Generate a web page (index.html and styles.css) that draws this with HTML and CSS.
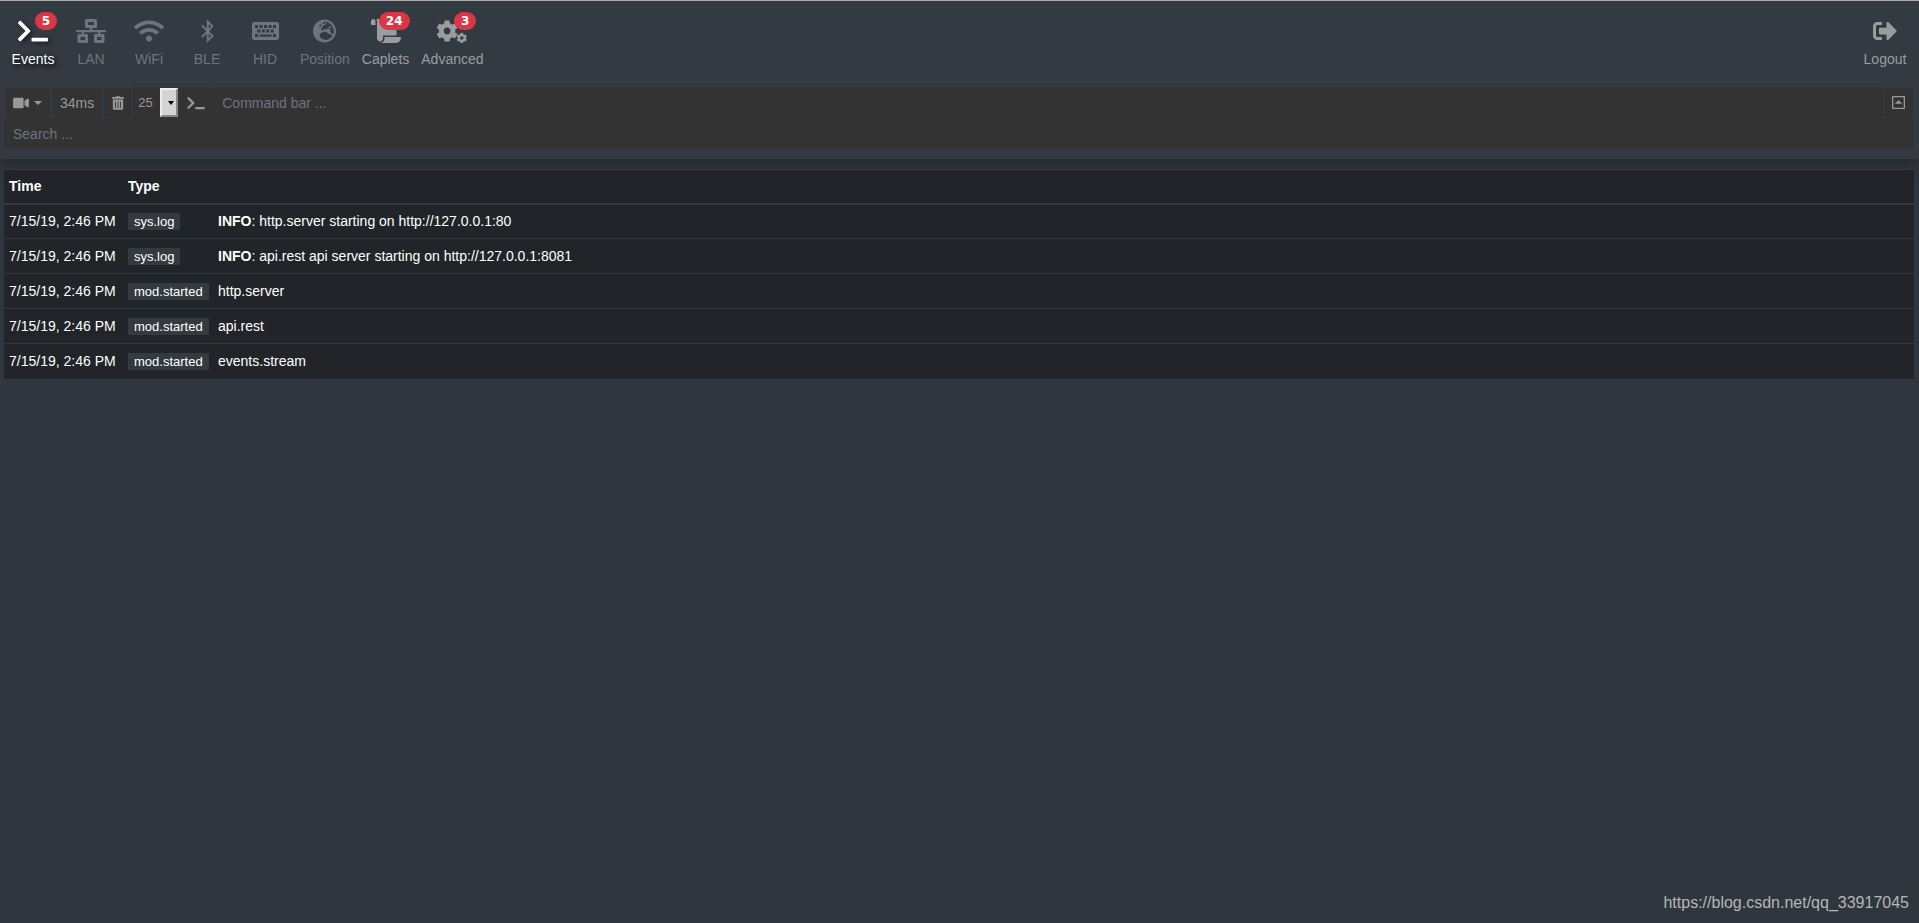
FILE: index.html
```html
<!DOCTYPE html>
<html lang="en">
<head>
<meta charset="UTF-8">
<meta name="viewport" content="width=device-width, initial-scale=1.0">
<title>Events</title>
<link rel="stylesheet" href="styles.css">
</head>
<body>
<header class="header">
<nav class="nav">
<a href="#events" class="nav-item active">
<span class="nav-icon">
<svg viewBox="0 0 640 512" width="30" height="24"><path d="M257.981 272.971L63.638 467.314c-9.373 9.373-24.569 9.373-33.941 0L7.029 444.647c-9.357-9.357-9.375-24.522-.04-33.901L161.011 256 6.99 101.255c-9.335-9.379-9.317-24.544.04-33.901l22.667-22.667c9.373-9.373 24.569-9.373 33.941 0L257.981 239.03c9.373 9.372 9.373 24.568 0 33.941zM640 456v-32c0-13.255-10.745-24-24-24H312c-13.255 0-24 10.745-24 24v32c0 13.255 10.745 24 24 24h304c13.255 0 24-10.745 24-24z"/></svg>
<span class="badge">5</span>
</span>
Events
</a>
<a href="#lan" class="nav-item muted">
<span class="nav-icon">
<svg viewBox="0 0 640 512" width="30" height="24"><path d="M640 264v-16c0-8.84-7.16-16-16-16H344v-40h72c17.67 0 32-14.33 32-32V32c0-17.67-14.33-32-32-32H224c-17.67 0-32 14.33-32 32v128c0 17.67 14.33 32 32 32h72v40H16c-8.84 0-16 7.16-16 16v16c0 8.84 7.16 16 16 16h104v40H64c-17.67 0-32 14.33-32 32v128c0 17.67 14.33 32 32 32h160c17.67 0 32-14.33 32-32V352c0-17.67-14.33-32-32-32h-56v-40h304v40h-56c-17.67 0-32 14.33-32 32v128c0 17.67 14.33 32 32 32h160c17.67 0 32-14.33 32-32V352c0-17.67-14.33-32-32-32h-56v-40h104c8.84 0 16-7.16 16-16zM256 128V64h128v64H256zm-64 320H96v-64h96v64zm352 0h-96v-64h96v64z"/></svg>
</span>
LAN
</a>
<a href="#wifi" class="nav-item muted">
<span class="nav-icon">
<svg viewBox="0 0 640 512" width="30" height="24"><path d="M634.91 154.88C457.74-8.99 182.19-8.93 5.09 154.88c-6.66 6.16-6.79 16.59-.35 22.98l34.24 33.97c6.14 6.1 16.02 6.23 22.4.38 145.92-133.68 371.3-133.71 517.25 0 6.38 5.85 16.26 5.71 22.4-.38l34.24-33.97c6.43-6.39 6.3-16.82-.36-22.98zM320 352c-35.35 0-64 28.65-64 64s28.65 64 64 64 64-28.65 64-64-28.65-64-64-64zm202.67-83.59c-115.26-101.93-290.21-101.82-405.34 0-6.9 6.1-7.12 16.69-.57 23.15l34.44 33.99c6 5.92 15.66 6.32 22.05.8 83.95-72.57 209.74-72.41 293.49 0 6.39 5.52 16.05 5.13 22.05-.8l34.44-33.99c6.56-6.46 6.33-17.06-.56-23.15z"/></svg>
</span>
WiFi
</a>
<a href="#ble" class="nav-item muted">
<span class="nav-icon">
<svg viewBox="0 0 320 512" width="15" height="24"><path d="M196.48 260.023l92.626-103.333L143.125 0v206.33l-86.111-86.111-31.406 31.405 108.061 108.399L25.608 368.422l31.406 31.405 86.111-86.111L145.84 512l148.552-148.644-97.912-103.333zm40.86-102.996l-49.977 49.978-.338-100.295 50.315 50.317zM187.363 313.04l49.977 49.978-50.315 50.316.338-100.294z"/></svg>
</span>
BLE
</a>
<a href="#hid" class="nav-item muted">
<span class="nav-icon">
<svg viewBox="0 0 576 512" width="27" height="24"><path fill-rule="evenodd" d="M528 448H48c-26.5 0-48-21.5-48-48V112c0-26.5 21.5-48 48-48h480c26.5 0 48 21.5 48 48v288c0 26.5-21.5 48-48 48zM64 128h64v64H64zM160 128h64v64h-64zM256 128h64v64h-64zM352 128h64v64h-64zM448 128h64v64h-64zM112 224h64v64h-64zM208 224h64v64h-64zM304 224h64v64h-64zM400 224h64v64h-64zM64 320h64v64H64zM160 328h256v48H160zM448 320h64v64h-64z"/></svg>
</span>
HID
</a>
<a href="#position" class="nav-item muted">
<span class="nav-icon">
<svg viewBox="0 0 496 512" width="23" height="24"><path fill-rule="evenodd" d="M248 8C111 8 0 119 0 256s111 248 248 248 248-111 248-248S385 8 248 8zm200 248c0 22.5-3.9 44.2-10.8 64.4h-20.3c-4.3 0-8.4-1.7-11.4-4.8l-32-32.6c-4.5-4.6-4.5-12.1.1-16.700l12.5-12.5v-8.7c0-3-1.2-5.9-3.3-8l-9.4-9.4c-2.1-2.1-5-3.3-8-3.3h-16c-6.2 0-11.3-5.1-11.3-11.3 0-3 1.2-5.9 3.3-8l9.4-9.4c2.1-2.1 5-3.3 8-3.3h32c6.2 0 11.3-5.1 11.3-11.3v-9.4c0-6.2-5.1-11.3-11.3-11.3h-36.7c-8.8 0-16 7.2-16 16v4.5c0 6.9-4.4 13-10.9 15.2l-31.6 10.5c-3.3 1.1-5.5 4.1-5.5 7.6v2.2c0 4.4-3.6 8-8 8h-16c-4.4 0-8-3.6-8-8s-3.6-8-8-8H247c-3 0-5.8 1.7-7.2 4.4l-9.4 18.7c-2.7 5.4-8.2 8.8-14.3 8.8H194c-8.8 0-16-7.2-16-16V199c0-4.2 1.7-8.3 4.7-11.3l20.1-20.1c4.6-4.6 7.2-10.9 7.2-17.5 0-3.4 2.2-6.5 5.5-7.6l40-13.3c1.7-.6 3.2-1.5 4.4-2.7l26.8-26.8c2.1-2.1 3.3-5 3.3-8 0-6.2-5.1-11.3-11.3-11.3H258l-16 16v8c0 4.4-3.6 8-8 8h-16c-4.4 0-8-3.6-8-8v-20c0-2.5 1.2-4.9 3.2-6.4l28.9-21.700c1.9-.1 3.8-.3 5.7-.3C358.3 56 448 145.7 448 256zM130.1 149.1c0-3 1.2-5.9 3.3-8l25.4-25.4c2.1-2.1 5-3.3 8-3.3 6.2 0 11.3 5.1 11.3 11.3v16c0 3-1.2 5.9-3.3 8l-9.4 9.4c-2.1 2.1-5 3.3-8 3.3h-16c-6.2 0-11.3-5.1-11.3-11.300zm128 306.4v-7.1c0-8.8-7.2-16-16-16h-20.2c-10.8 0-26.7-5.3-35.4-11.8l-22.2-16.7c-11.5-8.6-18.2-22.1-18.2-36.4v-23.9c0-16 8.4-30.8 22.1-39l42.9-25.7c7.1-4.2 15.2-6.5 23.4-6.5h31.2c10.9 0 21.4 3.9 29.6 10.9l43.2 37.1h18.3c8.5 0 16.6 3.4 22.6 9.4l17.3 17.3c3.4 3.4 8.1 5.3 12.9 5.3H423c-32.4 58.9-93.8 99.5-164.9 103.1z"/></svg>
</span>
Position
</a>
<a href="#caplets" class="nav-item">
<span class="nav-icon">
<svg viewBox="0 0 640 512" width="30" height="24"><path d="M48 0C21.53 0 0 21.53 0 48v64c0 8.84 7.16 16 16 16h80V48C96 21.53 74.47 0 48 0zm208 412.57V352h288V96c0-52.94-43.06-96-96-96H111.59C121.74 13.41 128 29.92 128 48v368c0 38.87 34.65 69.65 74.75 63.12C234.22 474 256 444.46 256 412.57zM288 384v32c0 52.93-43.06 96-96 96h336c61.86 0 112-50.14 112-112 0-8.84-7.16-16-16-16H288z"/></svg>
<span class="badge">24</span>
</span>
Caplets
</a>
<a href="#advanced" class="nav-item">
<span class="nav-icon">
<svg viewBox="0 0 640 512" width="30" height="24">
<defs><path id="cog" d="M487.4 315.7l-42.6-24.6c4.3-23.2 4.3-47 0-70.2l42.6-24.6c4.9-2.8 7.1-8.6 5.5-14-11.1-35.6-30-67.8-54.7-94.6-3.8-4.1-10-5.1-14.8-2.3L380.8 110c-17.9-15.4-38.5-27.3-60.8-35.1V25.8c0-5.6-3.9-10.5-9.4-11.7-36.7-8.2-74.3-7.8-109.2 0-5.5 1.2-9.4 6.1-9.4 11.7V75c-22.2 7.9-42.8 19.8-60.8 35.1L88.7 85.5c-4.9-2.8-11-1.9-14.8 2.3-24.7 26.7-43.6 58.9-54.7 94.6-1.7 5.4.6 11.2 5.5 14L67.3 221c-4.3 23.2-4.3 47 0 70.2l-42.6 24.6c-4.9 2.8-7.1 8.6-5.5 14 11.1 35.6 30 67.8 54.7 94.6 3.8 4.1 10 5.1 14.8 2.3l42.6-24.6c17.9 15.4 38.5 27.3 60.8 35.1v49.2c0 5.6 3.9 10.5 9.4 11.7 36.7 8.2 74.3 7.8 109.2 0 5.5-1.2 9.4-6.1 9.4-11.7v-49.2c22.2-7.9 42.8-19.8 60.8-35.1l42.6 24.6c4.9 2.8 11 1.9 14.8-2.3 24.7-26.7 43.6-58.9 54.7-94.6 1.5-5.5-.7-11.3-5.6-14.1zM256 336c-44.1 0-80-35.9-80-80s35.9-80 80-80 80 35.9 80 80-35.9 80-80 80z"/></defs>
<use href="#cog" transform="translate(-18 23) scale(.91)"/>
<use href="#cog" transform="translate(414 290) scale(.45)"/>
<use href="#cog" transform="translate(414 -8) scale(.45)"/>
</svg>
<span class="badge">3</span>
</span>
Advanced
</a>
<a href="#logout" class="nav-item logout">
<span class="nav-icon">
<svg viewBox="0 0 512 512" width="24" height="24"><path d="M497 273L329 441c-15 15-41 4.5-41-17v-96H152c-13.3 0-24-10.7-24-24v-96c0-13.3 10.7-24 24-24h136V88c0-21.4 25.9-32 41-17l168 168c9.3 9.4 9.3 24.6 0 34zM192 436v-40c0-6.6-5.4-12-12-12H96c-17.7 0-32-14.3-32-32V160c0-17.7 14.3-32 32-32h84c6.6 0 12-5.4 12-12V76c0-6.6-5.4-12-12-12H96c-53 0-96 43-96 96v192c0 53 43 96 96 96h84c6.6 0 12-5.4 12-12z"/></svg>
</span>
Logout
</a>
</nav>
<form class="toolbar">
<button type="button" class="btn" aria-label="Record">
<svg viewBox="0 0 576 512" width="16" height="14"><path d="M336.2 64H47.8C21.4 64 0 85.4 0 111.8v288.4C0 426.6 21.4 448 47.8 448h288.4c26.4 0 47.8-21.4 47.8-47.8V111.8c0-26.4-21.4-47.8-47.8-47.8zm189.4 37.7L416 177.3v157.4l109.6 75.5c21.2 14.6 50.4-.3 50.4-25.8V127.5c0-25.4-29.1-40.4-50.4-25.8z"/></svg>
<span class="caret"></span>
</button>
<button type="button" class="btn">34ms</button>
<button type="button" class="btn" aria-label="Clear">
<svg viewBox="0 0 448 512" width="12" height="14"><path d="M32 464a48 48 0 0 0 48 48h288a48 48 0 0 0 48-48V128H32zm272-256a16 16 0 0 1 32 0v224a16 16 0 0 1-32 0zm-96 0a16 16 0 0 1 32 0v224a16 16 0 0 1-32 0zm-96 0a16 16 0 0 1 32 0v224a16 16 0 0 1-32 0zM432 32H312l-9.4-18.7A24 24 0 0 0 281.1 0H166.8a23.72 23.72 0 0 0-21.4 13.3L136 32H16A16 16 0 0 0 0 48v32a16 16 0 0 0 16 16h416a16 16 0 0 0 16-16V48a16 16 0 0 0-16-16z"/></svg>
</button>
<div class="limit">
<select aria-label="Events shown">
<option>25</option>
<option>50</option>
<option>100</option>
</select>
</div>
<label for="command" class="prompt" aria-label="Command">
<svg viewBox="0 0 640 512" width="18" height="14"><path d="M257.981 272.971L63.638 467.314c-9.373 9.373-24.569 9.373-33.941 0L7.029 444.647c-9.357-9.357-9.375-24.522-.04-33.901L161.011 256 6.99 101.255c-9.335-9.379-9.317-24.544.04-33.901l22.667-22.667c9.373-9.373 24.569-9.373 33.941 0L257.981 239.03c9.373 9.372 9.373 24.568 0 33.941zM640 456v-32c0-13.255-10.745-24-24-24H312c-13.255 0-24 10.745-24 24v32c0 13.255 10.745 24 24 24h304c13.255 0 24-10.745 24-24z"/></svg>
</label>
<input type="text" id="command" class="field" placeholder="Command bar ...">
<button type="button" class="btn" aria-label="Collapse">
<svg viewBox="0 0 13 13" width="13" height="13"><path fill-rule="evenodd" d="M1 0h11a1 1 0 0 1 1 1v11a1 1 0 0 1-1 1H1a1 1 0 0 1-1-1V1a1 1 0 0 1 1-1zM1.300 1.300v10.400h10.400V1.300zM3.300 7.800V7l3.200-2.800L9.700 7v.8z"/></svg>
</button>
</form>
<input type="search" class="field search" placeholder="Search ..." aria-label="Search">
</header>
<main class="content">
<table class="events">
<thead>
<tr><th class="time">Time</th><th class="type">Type</th><th></th></tr>
</thead>
<tbody>
<tr><td>7/15/19, 2:46 PM</td><td><span class="tag">sys.log</span></td><td><b>INFO</b>: http.server starting on http://127.0.0.1:80</td></tr>
<tr><td>7/15/19, 2:46 PM</td><td><span class="tag">sys.log</span></td><td><b>INFO</b>: api.rest api server starting on http://127.0.0.1:8081</td></tr>
<tr><td>7/15/19, 2:46 PM</td><td><span class="tag">mod.started</span></td><td>http.server</td></tr>
<tr><td>7/15/19, 2:46 PM</td><td><span class="tag">mod.started</span></td><td>api.rest</td></tr>
<tr><td>7/15/19, 2:46 PM</td><td><span class="tag">mod.started</span></td><td>events.stream</td></tr>
</tbody>
</table>
</main>
<footer class="source">https://blog.csdn.net/qq_33917045</footer>
</body>
</html>
```

FILE: styles.css
```css
* {
margin: 0;
padding: 0;
box-sizing: border-box;
}
body {
min-height: 100vh;
display: flex;
flex-direction: column;
background: #30363e;
color: #fff;
font-family: "Liberation Sans", Arial, sans-serif;
font-size: 14px;
line-height: 20px;
}
svg {
display: block;
fill: currentColor;
}
.header {
padding: 0 5px 10px 4px;
background: #343a42;
border-top: 1px solid #a9aaab;
box-shadow: 0 4px 16px rgba(0, 0, 0, 0.3);
}
/* Navigation */
.nav {
display: flex;
padding: 18px 0;
}
.nav-item {
display: flex;
flex-direction: column;
align-items: center;
gap: 6px;
min-width: 58px;
padding: 0 6px;
color: #9a9da0;
text-decoration: none;
}
.nav-item.muted {
color: #6c757d;
}
.nav-item.active {
color: #fff;
text-shadow: 2px 2px 5px #000;
}
.nav-item.active svg {
filter: drop-shadow(2px 2px 2px rgba(0, 0, 0, 0.5));
}
.nav-item.logout {
margin-left: auto;
}
.nav-icon {
position: relative;
}
.badge {
position: absolute;
top: -7px;
right: -9px;
padding: 0 7px;
border-radius: 9px;
background: #dc3545;
color: #fff;
font: bold 12px/18px "DejaVu Sans", sans-serif;
text-shadow: none;
}
/* Toolbar */
.toolbar {
display: flex;
height: 31px;
}
.btn {
display: flex;
align-items: center;
gap: 5px;
margin: 1px;
padding: 0 8px;
border: none;
border-radius: 3px;
background: #333;
color: #999;
font: inherit;
}
.caret {
border: 4px solid transparent;
border-top-color: #999;
border-bottom: none;
}
.limit {
position: relative;
}
.limit select {
appearance: none;
width: 45px;
height: 100%;
padding-left: 5px;
border: none;
background: #333;
color: #999;
font: 13px "Liberation Sans", Arial, sans-serif;
}
/* drop-down button drawn over the right end of the select */
.limit::before {
content: "";
position: absolute;
top: 1px;
right: 0;
bottom: 1px;
width: 14px;
border: 2px solid;
border-color: #eee #888 #888 #eee;
background: #d4d4d4;
pointer-events: none;
}
.limit::after {
content: "";
position: absolute;
top: 14px;
right: 4px;
border: 3px solid transparent;
border-top: 4px solid #000;
border-bottom: none;
pointer-events: none;
}
.prompt {
display: flex;
align-items: center;
padding: 0 9px;
background: #333;
color: #999;
}
.field {
flex: 1;
min-width: 0;
height: 31px;
padding: 0 8px;
border: none;
border-radius: 3px;
background: #333;
color: #999;
font: inherit;
}
.field::placeholder {
color: #6c757d;
opacity: 1;
}
.search {
display: block;
width: 100%;
padding: 0 9px;
}
/* Events table */
.content {
flex: 1;
padding: 10px 5px 10px 4px;
}
.events {
width: 100%;
border-collapse: collapse;
table-layout: fixed;
background: #212529;
}
.events th,
.events td {
height: 35px;
padding: 0 5px;
border-top: 1px solid #32383e;
text-align: left;
white-space: nowrap;
}
.events thead th {
height: 34px;
border-bottom: 2px solid #32383e;
}
.events .time {
width: 119px;
}
.events .type {
width: 90px;
}
.tag {
display: inline-block;
padding: 0 6px;
border-radius: 1px;
background: #343a40;
font-size: 13px;
line-height: 17px;
}
.source {
padding: 0 10px 10px;
color: #b4b6b9;
font-size: 16px;
text-align: right;
}
```
